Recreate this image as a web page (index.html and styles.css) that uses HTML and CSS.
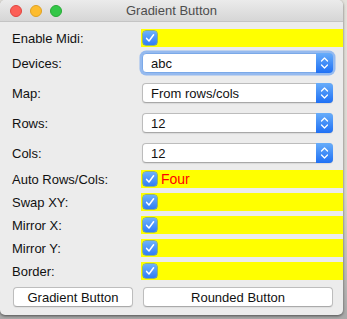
FILE: index.html
```html
<!DOCTYPE html>
<html lang="en">
	<head>
		<meta charset="UTF-8" />
		<meta name="viewport" content="width=device-width, initial-scale=1.0" />
		<title>Gradient Button</title>
		<link rel="stylesheet" href="styles.css">
	</head>
	<body>
		<div class="window">
			<div class="titlebar">
				<div class="lights">
					<span class="light red"></span>
					<span class="light yellow"></span>
					<span class="light green"></span>
				</div>
				<div class="title">Gradient Button</div>
			</div>

			<div class="content">
				<div class="row check-row first">
					<label class="label">Enable Midi:</label>
					<div class="field"><span class="checkbox"><svg viewBox="0 0 14 14"><path d="M3.6 7.4 L6 10 L10.6 3.8" /></svg></span></div>
				</div>

				<div class="row combo-row first-combo">
					<label class="label">Devices:</label>
					<div class="combo focused">
						<span class="combo-text">abc</span>
						<span class="combo-arrow"><svg viewBox="0 0 17 20"><path d="M5.5 8 L8.5 5 L11.5 8 M5.5 12 L8.5 15 L11.5 12" /></svg></span>
					</div>
				</div>

				<div class="row combo-row">
					<label class="label">Map:</label>
					<div class="combo">
						<span class="combo-text">From rows/cols</span>
						<span class="combo-arrow"><svg viewBox="0 0 17 20"><path d="M5.5 8 L8.5 5 L11.5 8 M5.5 12 L8.5 15 L11.5 12" /></svg></span>
					</div>
				</div>

				<div class="row combo-row">
					<label class="label">Rows:</label>
					<div class="combo">
						<span class="combo-text">12</span>
						<span class="combo-arrow"><svg viewBox="0 0 17 20"><path d="M5.5 8 L8.5 5 L11.5 8 M5.5 12 L8.5 15 L11.5 12" /></svg></span>
					</div>
				</div>

				<div class="row combo-row">
					<label class="label">Cols:</label>
					<div class="combo">
						<span class="combo-text">12</span>
						<span class="combo-arrow"><svg viewBox="0 0 17 20"><path d="M5.5 8 L8.5 5 L11.5 8 M5.5 12 L8.5 15 L11.5 12" /></svg></span>
					</div>
				</div>

				<div class="row check-row after-combo">
					<label class="label">Auto Rows/Cols:</label>
					<div class="field"><span class="checkbox"><svg viewBox="0 0 14 14"><path d="M3.6 7.4 L6 10 L10.6 3.8" /></svg></span><span class="field-text">Four</span></div>
				</div>

				<div class="row check-row">
					<label class="label">Swap XY:</label>
					<div class="field"><span class="checkbox"><svg viewBox="0 0 14 14"><path d="M3.6 7.4 L6 10 L10.6 3.8" /></svg></span></div>
				</div>

				<div class="row check-row">
					<label class="label">Mirror X:</label>
					<div class="field"><span class="checkbox"><svg viewBox="0 0 14 14"><path d="M3.6 7.4 L6 10 L10.6 3.8" /></svg></span></div>
				</div>

				<div class="row check-row">
					<label class="label">Mirror Y:</label>
					<div class="field"><span class="checkbox"><svg viewBox="0 0 14 14"><path d="M3.6 7.4 L6 10 L10.6 3.8" /></svg></span></div>
				</div>

				<div class="row check-row">
					<label class="label">Border:</label>
					<div class="field"><span class="checkbox"><svg viewBox="0 0 14 14"><path d="M3.6 7.4 L6 10 L10.6 3.8" /></svg></span></div>
				</div>

				<div class="buttons">
					<button class="btn gradient-btn">Gradient Button</button>
					<button class="btn rounded-btn">Rounded Button</button>
				</div>
			</div>
		</div>
	</body>
</html>
```

FILE: styles.css
```css
body {
	margin: 0;
	width: 347px;
	height: 319px;
	overflow: hidden;
	background: linear-gradient(to bottom, #e4e2dc 0%, #d9d6cf 60%, #a9a9a9 100%);
	font-family: "Liberation Sans", Arial, sans-serif;
	font-size: 13px;
	color: #111;
}
.window {
	width: 343px;
	height: 315px;
	background: #ececec;
	border-radius: 5px;
	box-shadow: 0 1px 3px rgba(0, 0, 0, 0.55);
	overflow: hidden;
}
.titlebar {
	height: 21px;
	display: flex;
	align-items: center;
	position: relative;
	background: linear-gradient(to bottom, #ebebeb, #d6d6d6);
	border-bottom: 1px solid #c4c4c4;
}
.lights {
	display: flex;
	gap: 8px;
	padding-left: 10px;
	z-index: 1;
}
.light {
	width: 12px;
	height: 12px;
	border-radius: 50%;
	box-sizing: border-box;
}
.red {
	background: #fc5f57;
	border: 1px solid #e0443e;
}
.yellow {
	background: #fdbc2e;
	border: 1px solid #dea123;
}
.green {
	background: #33c748;
	border: 1px solid #27aa35;
}
.title {
	position: absolute;
	left: 0;
	right: 0;
	text-align: center;
	color: #4d4d4d;
	font-size: 13px;
}
.content {
	padding-left: 12px;
	display: flex;
	flex-direction: column;
}
.row {
	display: flex;
	align-items: center;
}
.label {
	width: 129px;
	flex: none;
}
.check-row {
	height: 18px;
	margin-top: 5px;
}
.check-row.first {
	margin-top: 7px;
}
.check-row.after-combo {
	margin-top: 7px;
}
.field {
	flex: 1;
	height: 18px;
	background: #ffff00;
	display: flex;
	align-items: center;
	padding-left: 2px;
}
.checkbox {
	width: 14px;
	height: 14px;
	border-radius: 3px;
	background: linear-gradient(to bottom, #6cb1fb, #2f7df6);
	box-shadow: 0 0 0 0.5px #2a6fd8;
	display: flex;
}
.checkbox svg {
	width: 14px;
	height: 14px;
}
.checkbox path {
	fill: none;
	stroke: #fff;
	stroke-width: 1.5;
	stroke-linecap: round;
	stroke-linejoin: round;
}
.field-text {
	color: #ff0000;
	margin-left: 4px;
	font-size: 14px;
}
.combo-row {
	height: 20px;
	margin-top: 10px;
}
.combo-row.first-combo {
	margin-top: 6px;
}
.combo {
	width: 191px;
	height: 20px;
	box-sizing: border-box;
	margin-left: 1px;
	background: #fff;
	border: 1px solid #bcbcbc;
	border-bottom-color: #a8a8a8;
	border-radius: 4px;
	display: flex;
	align-items: center;
	box-shadow: 0 1px 1px rgba(0, 0, 0, 0.08);
}
.combo.focused {
	box-shadow: 0 0 0 2.5px rgba(120, 170, 240, 0.75);
	border-color: #7ba9e8;
}
.combo-text {
	flex: 1;
	padding-left: 8px;
}
.combo-arrow {
	width: 17px;
	height: 20px;
	margin: -1px -1px -1px 0;
	border-radius: 0 4px 4px 0;
	background: linear-gradient(to bottom, #68adfa, #1f70f5);
	display: flex;
}
.combo-arrow svg {
	width: 17px;
	height: 20px;
}
.combo-arrow path {
	fill: none;
	stroke: #fff;
	stroke-width: 1.3;
	stroke-linecap: round;
	stroke-linejoin: round;
}
.buttons {
	display: flex;
	margin-top: 7px;
	gap: 10px;
	padding-left: 1px;
}
.btn {
	height: 20px;
	padding: 0;
	background: #fff;
	border: 1px solid #bdbdbd;
	border-bottom-color: #aaaaaa;
	border-radius: 4px;
	font-family: "Liberation Sans", Arial, sans-serif;
	font-size: 13px;
	color: #111;
	box-shadow: 0 1px 1px rgba(0, 0, 0, 0.06);
}
.gradient-btn {
	width: 120px;
}
.rounded-btn {
	width: 190px;
}
```
